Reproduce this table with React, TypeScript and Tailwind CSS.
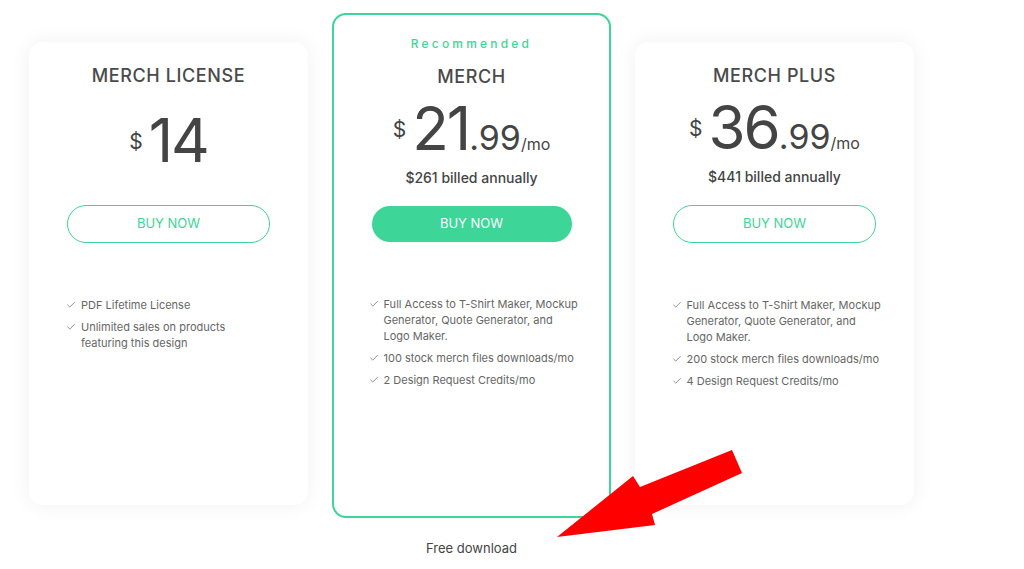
import { Check } from "lucide-react";

const green = "#3dd598";

const Feature = ({ lines }: { lines: string[] }) => (
  <li className="flex items-start gap-[5px]">
    <Check size={10} strokeWidth={2} className="mt-[3px] shrink-0 text-[#777]" />
    <span className="flex flex-col">
      {lines.map((l) => (
        <span key={l} className="whitespace-nowrap">
          {l}
        </span>
      ))}
    </span>
  </li>
);

const Price = ({ whole, cents, className = "" }: { whole: string; cents?: string; className?: string }) => (
  <div className={`flex items-center justify-center text-[#444] ${className}`}>
    <span className="text-[21px] leading-none mr-[6px] mt-[2px]">$</span>
    <div className="flex items-baseline">
      <span className="text-[60px] leading-[60px] tracking-[-2px]">{whole}</span>
      {cents && (
        <>
          <span className="text-[34px] leading-none">.{cents}</span>
          <span className="text-[16px] leading-none">/mo</span>
        </>
      )}
    </div>
  </div>
);

const Card = ({ children }: { children: React.ReactNode }) => (
  <div className="w-[279px] h-[463px] mt-[29px] bg-white rounded-[14px] shadow-[0_0_22px_rgba(0,0,0,0.06)] flex flex-col items-center pt-[22px]">
    {children}
  </div>
);

const Title = ({ children, className = "" }: { children: React.ReactNode; className?: string }) => (
  <h2 className={`h-6 leading-6 text-[18px] font-medium tracking-[0.6px] text-[#4a4a4a] ${className}`}>{children}</h2>
);

export default function App() {
  return (
    <div
      className="relative w-[1024px] h-[569px] bg-white overflow-hidden"
      style={{ fontFamily: "Inter, 'Noto Sans', sans-serif" }}
    >
      <div className="flex items-start gap-6 ml-[29px] mt-[13px]">
        {/* Merch License */}
        <Card>
          <Title>MERCH LICENSE</Title>
          <Price whole="14" className="mt-[22px]" />
          <button className="mt-[35px] w-[203px] h-[38px] rounded-full border border-[#3dd598] text-[13px] text-[#3dd598]">
            BUY NOW
          </button>
          <ul className="mt-[54px] w-[205px] text-[11px] leading-4 text-[#666] flex flex-col gap-[6px]">
            <Feature lines={["PDF Lifetime License"]} />
            <Feature lines={["Unlimited sales on products", "featuring this design"]} />
          </ul>
        </Card>

        {/* Merch */}
        <div className="flex flex-col items-center">
          <div className="w-[279px] h-[505px] bg-white rounded-[14px] border-2 border-[#3dd598] flex flex-col items-center pt-[21px]">
            <p className="text-[12px] leading-4 tracking-[3.2px] font-medium" style={{ color: green }}>
              Recommended
            </p>
            <Title className="mt-[13px]">MERCH</Title>
            <Price whole="21" cents="99" className="mt-[9px]" />
            <p className="mt-[10px] text-[14px] leading-5 font-medium text-[#444]">$261 billed annually</p>
            <button className="mt-[18px] w-[200px] h-[36px] rounded-full bg-[#3dd598] text-[13px] text-white">
              BUY NOW
            </button>
            <ul className="mt-[54px] w-[206px] text-[11px] leading-4 text-[#666] flex flex-col gap-[6px]">
              <Feature lines={["Full Access to T-Shirt Maker, Mockup", "Generator, Quote Generator, and", "Logo Maker."]} />
              <Feature lines={["100 stock merch files downloads/mo"]} />
              <Feature lines={["2 Design Request Credits/mo"]} />
            </ul>
          </div>
          <p className="mt-5 text-[13px] leading-5 text-[#444]">Free download</p>
        </div>

        {/* Merch Plus */}
        <Card>
          <Title>MERCH PLUS</Title>
          <Price whole="36" cents="99" className="mt-[9px]" />
          <p className="mt-[10px] text-[14px] leading-5 font-medium text-[#444]">$441 billed annually</p>
          <button className="mt-[18px] w-[203px] h-[38px] rounded-full border border-[#3dd598] text-[13px] text-[#3dd598]">
            BUY NOW
          </button>
          <ul className="mt-[54px] w-[206px] text-[11px] leading-4 text-[#666] flex flex-col gap-[6px]">
            <Feature lines={["Full Access to T-Shirt Maker, Mockup", "Generator, Quote Generator, and", "Logo Maker."]} />
            <Feature lines={["200 stock merch files downloads/mo"]} />
            <Feature lines={["4 Design Request Credits/mo"]} />
          </ul>
        </Card>
      </div>

      {/* red arrow annotation */}
      <svg className="absolute left-0 top-0 pointer-events-none" width="1024" height="569">
        <polygon points="557,537 633,476 640,487 732,450 742,473 652,514 655,525" fill="#ff0000" />
      </svg>
    </div>
  );
}
